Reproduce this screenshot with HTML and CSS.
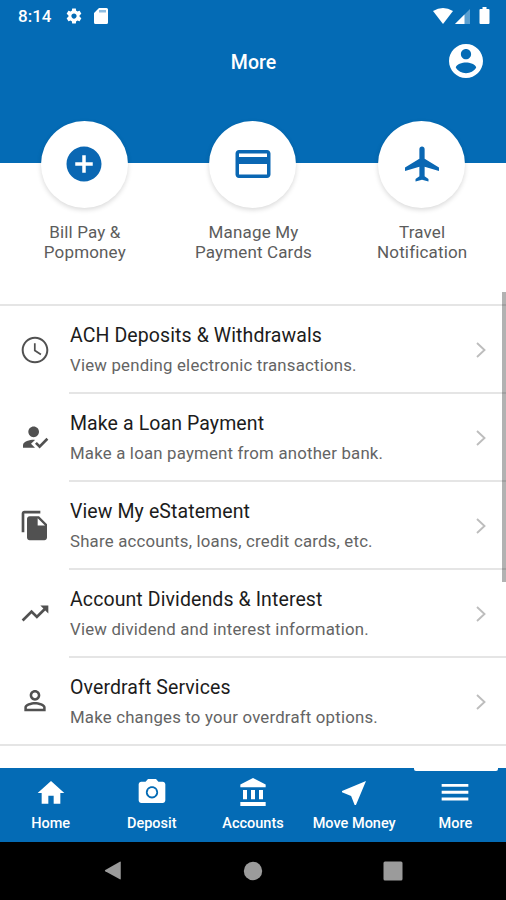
FILE: index.html
```html
<!DOCTYPE html>
<html lang="en">
<head>
<meta charset="utf-8">
<title>More</title>
<link rel="stylesheet" href="styles.css">
</head>
<body>
<div class="screen">
  <div class="status">
    <span class="clock">8:14</span>
    <svg class="st-gear" viewBox="0 0 24 24"><path d="M19.43 12.98c.04-.32.07-.64.07-.98s-.03-.66-.07-.98l2.11-1.65c.19-.15.24-.42.12-.64l-2-3.46c-.12-.22-.39-.3-.61-.22l-2.49 1c-.52-.4-1.08-.73-1.69-.98l-.38-2.65C14.46 2.18 14.25 2 14 2h-4c-.25 0-.46.18-.49.42l-.38 2.65c-.61.25-1.17.59-1.69.98l-2.49-1c-.23-.09-.49 0-.61.22l-2 3.46c-.13.22-.07.49.12.64l2.11 1.65c-.04.32-.07.65-.07.98s.03.66.07.98l-2.11 1.65c-.19.15-.24.42-.12.64l2 3.46c.12.22.39.3.61.22l2.49-1c.52.4 1.08.73 1.69.98l.38 2.65c.03.24.24.42.49.42h4c.25 0 .46-.18.49-.42l.38-2.65c.61-.25 1.17-.59 1.69-.98l2.49 1c.23.09.49 0 .61-.22l2-3.46c.12-.22.07-.49-.12-.64l-2.11-1.65zM12 15.5c-1.93 0-3.5-1.57-3.5-3.5s1.57-3.5 3.5-3.5 3.5 1.57 3.5 3.5-1.57 3.5-3.5 3.5z"/></svg>
    <svg class="st-sd" viewBox="0 0 14 16"><path d="M5 0h7.500a1.500 1.500 0 0 1 1.500 1.500v13a1.500 1.500 0 0 1-1.500 1.500h-11A1.500 1.500 0 0 1 0 14.500V5z"/><path class="slot" d="M5 2h7v2.500H5z"/></svg>
    <span class="spacer"></span>
    <svg class="st-wifi" viewBox="0 0 20 16"><path d="M10 16 0 3Q10-3 20 3z"/></svg>
    <svg class="st-cell" viewBox="0 0 15 15"><path class="dim" d="M15 0v15H0z"/><path d="M9.500 5.500V15H0z"/></svg>
    <svg class="st-batt" viewBox="0 0 10 17"><path d="M3 0h4v2h2a1 1 0 0 1 1 1v13a1 1 0 0 1-1 1H1a1 1 0 0 1-1-1V3a1 1 0 0 1 1-1h2z"/></svg>
  </div>
  <header class="header">
    <h1>More</h1>
    <svg class="avatar" viewBox="2 2 20 20"><path d="M12 2C6.480 2 2 6.480 2 12s4.480 10 10 10 10-4.480 10-10S17.520 2 12 2zm0 3c1.660 0 3 1.340 3 3s-1.340 3-3 3-3-1.340-3-3 1.340-3 3-3zm0 14.200c-2.500 0-4.710-1.280-6-3.220.03-1.990 4-3.080 6-3.080 1.990 0 5.970 1.090 6 3.080-1.290 1.940-3.500 3.220-6 3.220z"/></svg>
  </header>
  <section class="actions">
    <a class="action"><span class="disc"><svg viewBox="0 0 24 24"><path d="M12 2C6.480 2 2 6.480 2 12s4.480 10 10 10 10-4.480 10-10S17.520 2 12 2zm5 11h-4v4h-2v-4H7v-2h4V7h2v4h4v2z"/></svg></span><span class="label">Bill Pay &amp;<br>Popmoney</span></a>
    <a class="action"><span class="disc"><svg viewBox="0 0 24 24"><path d="M20 4H4c-1.110 0-1.990.89-1.990 2L2 18c0 1.110.89 2 2 2h16c1.110 0 2-.89 2-2V6c0-1.110-.89-2-2-2zm0 14H4v-6h16v6zm0-10H4V6h16v2z"/></svg></span><span class="label">Manage My<br>Payment Cards</span></a>
    <a class="action"><span class="disc"><svg viewBox="0 0 24 24"><path d="M21.700 16v-2l-8.200-5V3.500c0-.83-.67-1.500-1.500-1.500s-1.500.67-1.500 1.500V9l-8.200 5v2l8.200-2.500V19l-2.200 1.500V22l3.700-1 3.700 1v-1.500L13.500 19v-5.500l8.200 2.500z"/></svg></span><span class="label">Travel<br>Notification</span></a>
  </section>
  <main class="list">
    <div class="row">
      <svg class="icon" viewBox="0 0 24 24"><path d="M11.990 2C6.470 2 2 6.480 2 12s4.470 10 9.990 10C17.520 22 22 17.520 22 12S17.520 2 11.990 2zM12 20.500c-4.700 0-8.500-3.800-8.500-8.500S7.300 3.500 12 3.500s8.500 3.800 8.500 8.500-3.800 8.500-8.500 8.500zM12.500 7H11.200v5.700l4.900 3.200.7-1.100-4.300-2.800z"/></svg>
      <div class="text"><div class="title">ACH Deposits &amp; Withdrawals</div><div class="sub">View pending electronic transactions.</div></div>
      <svg class="chev" viewBox="0 0 10 16"><path d="M1 1l7.500 7L1 15"/></svg>
    </div>
    <div class="row">
      <svg class="icon" viewBox="0 .6 24 24"><path d="M9 17l3-2.940c-.39-.04-.68-.06-1-.06-2.670 0-8 1.340-8 4v2h9l-3-3zm2-5c2.210 0 4-1.790 4-4s-1.790-4-4-4-4 1.790-4 4 1.790 4 4 4zM15.470 20.500L12 17l1.400-1.410 2.070 2.080 5.130-5.170 1.400 1.410z"/></svg>
      <div class="text"><div class="title">Make a Loan Payment</div><div class="sub">Make a loan payment from another bank.</div></div>
      <svg class="chev" viewBox="0 0 10 16"><path d="M1 1l7.500 7L1 15"/></svg>
    </div>
    <div class="row">
      <svg class="icon" viewBox="0 .4 24 24"><path d="M16 1H4c-1.100 0-2 .9-2 2v14h2V3h12V1zm-1 4l6 6v10c0 1.100-.9 2-2 2H7.990C6.890 23 6 22.100 6 21l.01-14c0-1.100.89-2 1.990-2h7zm-1 7h5.500L14 6.500V12z"/></svg>
      <div class="text"><div class="title">View My eStatement</div><div class="sub">Share accounts, loans, credit cards, etc.</div></div>
      <svg class="chev" viewBox="0 0 10 16"><path d="M1 1l7.500 7L1 15"/></svg>
    </div>
    <div class="row">
      <svg class="icon" viewBox="0 .4 24 24"><path d="M16 6l2.290 2.290-4.880 4.880-4-4L2 16.590 3.410 18l6-6 4 4 6.300-6.290L22 12V6z"/></svg>
      <div class="text"><div class="title">Account Dividends &amp; Interest</div><div class="sub">View dividend and interest information.</div></div>
      <svg class="chev" viewBox="0 0 10 16"><path d="M1 1l7.500 7L1 15"/></svg>
    </div>
    <div class="row last">
      <svg class="icon" viewBox="0 1 24 24"><path d="M12 5.900c1.160 0 2.100.94 2.100 2.100s-.94 2.100-2.100 2.100S9.900 9.160 9.900 8s.94-2.100 2.100-2.100m0 9c2.970 0 6.100 1.460 6.100 2.100v1.100H5.900V17c0-.64 3.130-2.100 6.100-2.100M12 4C9.790 4 8 5.790 8 8s1.790 4 4 4 4-1.790 4-4-1.790-4-4-4zm0 9c-2.670 0-8 1.340-8 4v3h16v-3c0-2.660-5.330-4-8-4z"/></svg>
      <div class="text"><div class="title">Overdraft Services</div><div class="sub">Make changes to your overdraft options.</div></div>
      <svg class="chev" viewBox="0 0 10 16"><path d="M1 1l7.500 7L1 15"/></svg>
    </div>
    <div class="scrollbar"></div>
  </main>
  <nav class="tabs">
    <a class="tab"><svg viewBox="0 0 24 24"><path d="M10 20v-6h4v6h5v-8h3L12 3 2 12h3v8z"/></svg><span>Home</span></a>
    <a class="tab"><svg viewBox="0 .5 24 24"><circle cx="12" cy="12" r="3.200"/><path d="M9 2L7.170 4H4c-1.100 0-2 .9-2 2v12c0 1.100.9 2 2 2h16c1.100 0 2-.9 2-2V6c0-1.100-.9-2-2-2h-3.170L15 2H9zm3 14.600c-2.540 0-4.600-2.060-4.600-4.600s2.060-4.600 4.600-4.600 4.600 2.060 4.600 4.600-2.060 4.600-4.600 4.600z"/></svg><span>Deposit</span></a>
    <a class="tab"><svg viewBox="-.5 .3 24 24"><path d="M4 10v7h3v-7H4zm6 0v7h3v-7h-3zM2 22h19v-3H2v3zm14-12v7h3v-7h-3zm-4.500-9L2 6v2h19V6l-9.500-5z"/></svg><span>Accounts</span></a>
    <a class="tab"><svg viewBox="0 0 24 24"><path d="M21 3L3 10.530v.98l6.840 2.650L12.480 21h.98L21 3z"/></svg><span>Move Money</span></a>
    <a class="tab active"><svg viewBox="0 0 24 24"><path d="M2 5.200h20v2.200H2zM2 10.300h20v2.200H2zM2 15.400h20v2.200H2z"/></svg><span>More</span></a>
  </nav>
  <div class="sysnav">
    <svg viewBox="0 0 20 22"><path d="M1.500 10 17.500.8q1-.5 1 .6v18.200q0 1.100-1 .6L1.500 11.400q-1-.7 0-1.400z"/></svg>
    <svg viewBox="0 0 20 20"><circle cx="10" cy="10" r="9.200"/></svg>
    <svg viewBox="0 0 20 20"><rect x=".5" y=".5" width="19" height="19" rx="1.500"/></svg>
  </div>
</div>
</body>
</html>
```
FILE: styles.css
```css
* { box-sizing: border-box; }
body { margin: 0; font-family: Roboto, "Liberation Sans", sans-serif; background: #fff; }
svg { display: block; flex: none; }
.screen { width: 506px; height: 900px; display: flex; flex-direction: column; overflow: hidden; }
.status { height: 32px; flex: none; display: flex; align-items: center; background: #046bb5; color: #fff; fill: #fff; padding: 0 16px 0 18px; }
.clock { font-size: 17px; font-weight: 500; width: 47px; }
.st-gear { width: 18px; height: 18px; margin-top: -1px; }
.st-sd { width: 14px; height: 16px; margin-left: 11px; margin-top: -1px; }
.slot { fill: #8fbde0; }
.dim { fill: #5b9fd0; }
.spacer { flex: 1; }
.st-wifi { width: 20px; height: 16px; margin-top: -1px; }
.st-cell { width: 15px; height: 15px; margin: 0 9px 0 2px; }
.st-batt { width: 11px; height: 17px; margin-top: -1px; }
.header { height: 131px; flex: none; background: #046bb5; color: #fff; position: relative; text-align: center; }
.header h1 { margin: 0; padding: 18px 0 0 1px; font-size: 19.500px; line-height: 26px; font-weight: 500; }
.avatar { position: absolute; right: 23px; top: 12px; width: 34px; height: 34px; fill: #fff; }
.actions { height: 141px; flex: none; display: grid; grid-template-columns: repeat(3, 1fr); position: relative; }
.action { display: flex; flex-direction: column; align-items: center; margin-top: -42.500px; }
.disc { width: 87px; height: 87px; flex: none; border-radius: 50%; background: #fff; display: flex; align-items: center; justify-content: center; box-shadow: 0 2px 5px rgba(0, 0, 0, .15); }
.disc svg { width: 42px; height: 42px; fill: #0a67b3; }
.label { margin-top: 14px; padding-left: 1px; font-size: 17px; line-height: 20px; letter-spacing: .15px; color: #5c5c5c; text-align: center; }
.list { flex: 1; min-height: 0; border-top: 2px solid #e5e5e5; position: relative; }
.row { height: 88px; display: flex; align-items: center; position: relative; }
.icon { width: 32px; height: 32px; margin: 0 18px 0 19px; fill: #515151; }
.text { flex: 1; height: 88px; border-bottom: 2px solid #e5e5e5; padding: 17px 0 0 1px; }
.last .icon { margin-right: 0; }
.last .text { padding-left: 19px; }
.last::before { content: ""; position: absolute; left: 0; bottom: 0; width: 51px; height: 2px; background: #e5e5e5; }
.title { font-size: 19.500px; line-height: 26px; letter-spacing: .1px; color: #1c1c1c; }
.sub { margin-top: 5px; font-size: 16.800px; line-height: 22px; letter-spacing: .2px; color: #646464; }
.chev { position: absolute; right: 20px; top: 36px; width: 10px; height: 16px; fill: none; stroke: #bdbdbd; stroke-width: 1.900; }
.scrollbar { position: absolute; right: 0; top: -14px; width: 4px; height: 290px; background: rgba(0, 0, 0, .3); }
.tabs { height: 74px; flex: none; display: grid; grid-template-columns: repeat(5, 1fr); background: #046bb5; color: #fff; }
.tab { display: flex; flex-direction: column; align-items: center; padding: 8.500px 0 0; position: relative; font-size: 14.500px; font-weight: 500; white-space: nowrap; }
.tab svg { width: 32px; height: 32px; fill: #fff; }
.tab span { margin-top: 6px; line-height: 18px; }
.active::before { content: ""; position: absolute; top: 0; left: 9px; width: 84px; height: 2.500px; background: #fff; border-radius: 0 0 2px 2px; }
.sysnav { height: 58px; flex: none; background: #000; display: flex; justify-content: space-between; align-items: center; padding: 0 103px 0 103px; fill: #9b9b9b; }
.sysnav svg { width: 20px; height: 20px; }
```
